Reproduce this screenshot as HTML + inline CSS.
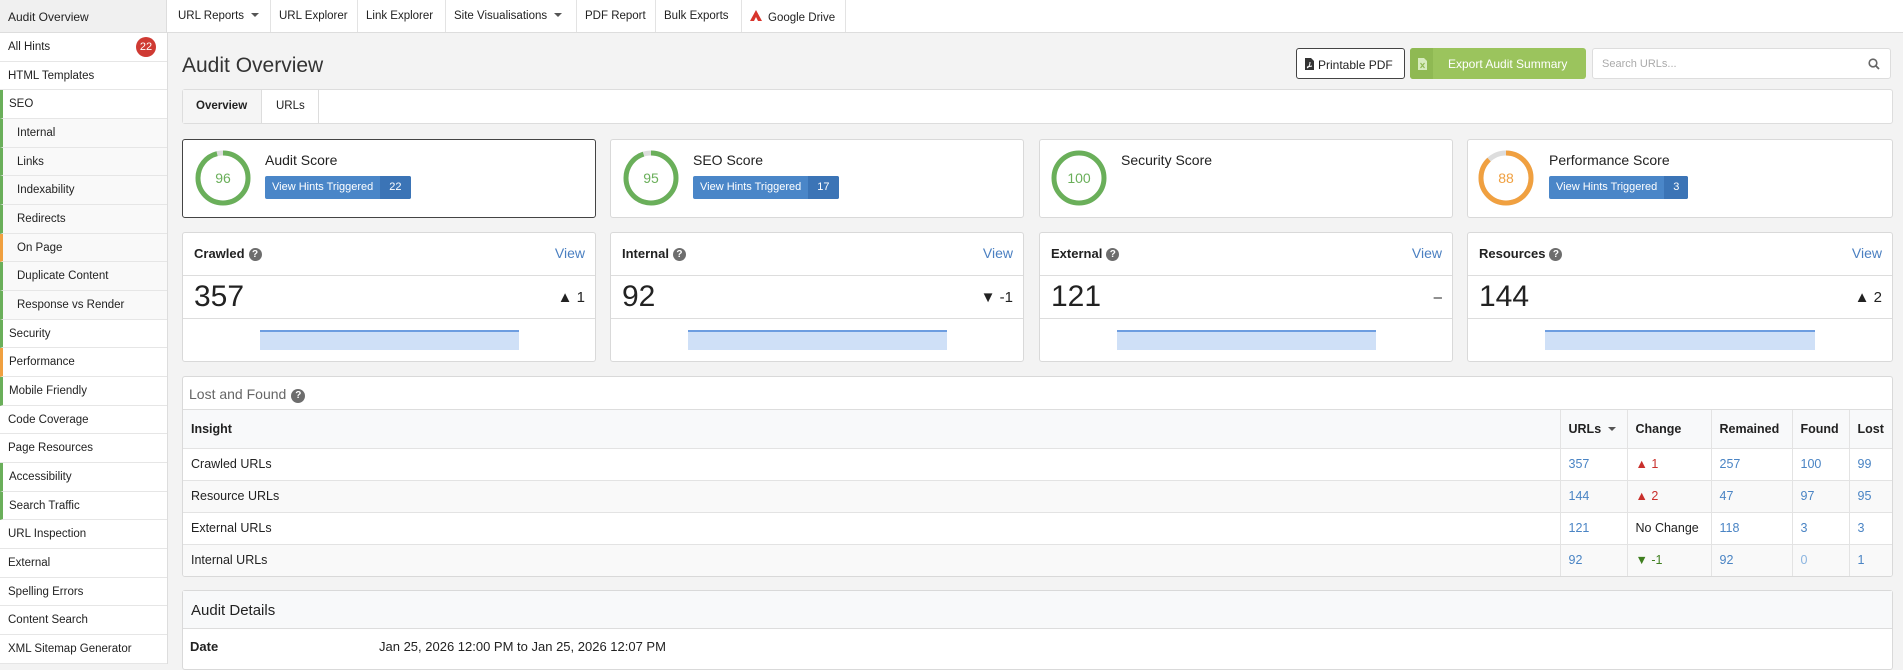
<!DOCTYPE html>
<html><head><meta charset="utf-8"><style>
*{box-sizing:border-box;margin:0;padding:0}
body{width:1903px;height:664px;overflow:hidden;background:#f3f3f3;font-family:"Liberation Sans",sans-serif;font-size:13px;color:#222;position:relative}
.abs{position:absolute}
#top{left:0;top:0;width:1903px;height:33px;background:#fff;border-bottom:1px solid #ddd}
#top .ao{left:0;top:0;width:167px;height:32px;background:#f0f0f0;border-right:1px solid #ddd;padding:10px 8px;font-size:12px}
.nav{top:0;height:32px;border-right:1px solid #e3e3e3;padding:10px 8px;font-size:11.5px;white-space:nowrap}
.caret{display:inline-block;border-left:4px solid transparent;border-right:4px solid transparent;border-top:4px solid #555;margin-left:7px;vertical-align:2px}
#side{left:0;top:33px;width:168px;height:631px;background:#fff;border-right:1px solid #ddd}
.si{height:28.68px;border-bottom:1px solid #e6e6e6;padding:8px 8px;font-size:11.5px;position:relative;white-space:nowrap}
.si.sub{background:#f9f9f9;padding-left:17px}
.si.g{border-left:3px solid #6aaf5a;padding-left:6px}.si.g.sub{padding-left:14px}
.si.o{border-left:3px solid #f0a040;padding-left:6px}.si.o.sub{padding-left:14px}
.badge{position:absolute;right:11px;top:4px;width:20px;height:20px;border-radius:50%;background:#cf3a33;color:#fff;font-size:11px;text-align:center;line-height:20px}
.card{position:absolute;background:#fff;border:1px solid #d9d9d9;border-radius:3px}
.hb{position:absolute;height:23px;border-radius:2px;background:#4a86c8;color:#fff;font-size:11px;line-height:23px;overflow:hidden;white-space:nowrap}
.hb span{display:inline-block;padding:0 7px}
.hb b{display:inline-block;background:#3b74b6;padding:0 9px;font-weight:normal;height:23px}
.q{display:inline-block;width:13px;height:13px;border-radius:50%;background:#6d6d6d;color:#fff;font-size:10px;line-height:13px;text-align:center;font-weight:bold;vertical-align:1px;margin-left:4px}
.st .h{position:absolute;left:0;right:0;top:0;height:43px;border-bottom:1px solid #ddd;padding:13px 11px;font-weight:bold;font-size:13px}
.st .h a{position:absolute;right:10px;top:12px;color:#4a7fc1;font-weight:normal;font-size:14px}
.st .v{position:absolute;left:0;right:0;top:43px;height:43px;border-bottom:1px solid #ddd;padding:4px 11px;font-size:30px}
.st .v i{position:absolute;right:10px;top:13px;font-style:normal;font-size:15px}
.st .c{position:absolute;top:97px;width:259px;height:20px;background:#cfe0f7;border-top:2px solid #6d9de0}
table{border-collapse:collapse;width:100%}
td,th{border-bottom:1px solid #e3e3e3;text-align:left;font-size:12.5px;font-weight:normal;padding:0 8px}
th{font-weight:bold;background:#f8f9fa;height:38px}
td{height:32px}
tr.alt td{background:#f9f9f9}
td.n,th.n{border-left:1px solid #e3e3e3}
.bl{color:#4a84c4}
.red{color:#c9302c}.grn{color:#3f7f1f}
</style></head><body>
<div id="top" class="abs">
 <div class="abs ao">Audit Overview</div>
 <div class="abs nav" style="left:170px;width:101px">URL Reports<span class="caret"></span></div>
 <div class="abs nav" style="left:271px;width:87px">URL Explorer</div>
 <div class="abs nav" style="left:358px;width:88px">Link Explorer</div>
 <div class="abs nav" style="left:446px;width:131px">Site Visualisations<span class="caret"></span></div>
 <div class="abs nav" style="left:577px;width:79px">PDF Report</div>
 <div class="abs nav" style="left:656px;width:86px">Bulk Exports</div>
 <div class="abs nav" style="left:742px;width:104px"><svg width="12" height="12" viewBox="0 0 12 12" style="vertical-align:-1px;margin-right:6px"><path d="M6 0L0 11h4L6 7l2 4h4z" fill="#d8342c"/></svg>Google Drive</div>
</div>
<div id="side" class="abs">
 <div class="si">All Hints<span class="badge">22</span></div>
 <div class="si">HTML Templates</div>
 <div class="si g">SEO</div>
 <div class="si sub g">Internal</div>
 <div class="si sub g">Links</div>
 <div class="si sub g">Indexability</div>
 <div class="si sub g">Redirects</div>
 <div class="si sub o">On Page</div>
 <div class="si sub g">Duplicate Content</div>
 <div class="si sub g">Response vs Render</div>
 <div class="si g">Security</div>
 <div class="si o">Performance</div>
 <div class="si g">Mobile Friendly</div>
 <div class="si">Code Coverage</div>
 <div class="si">Page Resources</div>
 <div class="si g">Accessibility</div>
 <div class="si g">Search Traffic</div>
 <div class="si">URL Inspection</div>
 <div class="si">External</div>
 <div class="si">Spelling Errors</div>
 <div class="si">Content Search</div>
 <div class="si">XML Sitemap Generator</div>
</div>

<div class="abs" style="left:182px;top:54px;font-size:21px;color:#333">Audit Overview</div>
<div class="abs" style="left:1296px;top:48px;width:109px;height:31px;border:1px solid #444;border-radius:3px;background:#fff;padding:9px 0 0 8px;font-size:12px"><svg width="9" height="12" viewBox="0 0 9 12" style="vertical-align:-1px;margin-right:4px"><path d="M0 0h6l3 3v9H0z" fill="#333"/><path d="M2 10c2-1 3-3 3-6M2 9l5-1" stroke="#fff" stroke-width="1" fill="none"/></svg>Printable PDF</div>
<div class="abs" style="left:1410px;top:48px;width:176px;height:31px;border-radius:3px;background:#9bc45d;color:#fff;font-size:12px;overflow:hidden"><div style="position:absolute;left:0;top:0;width:23px;height:31px;background:#8fb953"></div><svg class="abs" style="left:8px;top:10px" width="9" height="12" viewBox="0 0 9 12"><path d="M0 0h6l3 3v9H0z" fill="#d8ecbf"/><path d="M2.5 5l4 5M6.5 5l-4 5" stroke="#8fb953" stroke-width="1.2"/></svg><span style="position:absolute;left:38px;top:9px">Export Audit Summary</span></div>
<div class="abs" style="left:1592px;top:48px;width:299px;height:31px;border:1px solid #ddd;border-radius:3px;background:#fff;padding:9px 0 0 9px;font-size:11px;color:#aaa">Search URLs...<svg class="abs" style="right:10px;top:9px" width="12" height="12" viewBox="0 0 12 12"><circle cx="5" cy="5" r="3.8" stroke="#666" stroke-width="1.6" fill="none"/><path d="M8 8l3 3" stroke="#666" stroke-width="1.8"/></svg></div>

<div class="abs" style="left:182px;top:89px;width:1711px;height:35px;background:#fff;border:1px solid #ddd;border-radius:3px">
 <div class="abs" style="left:0;top:0;width:79px;height:33px;background:#f5f5f5;border-right:1px solid #ddd;font-weight:bold;padding:10px 0 0 13px;font-size:11.5px">Overview</div>
 <div class="abs" style="left:79px;top:0;width:57px;height:33px;border-right:1px solid #ddd;padding:10px 0 0 14px;font-size:11.5px">URLs</div>
</div>

<!-- score cards -->
<div class="card" style="left:182px;top:139px;width:414px;height:79px;border-color:#444">
 <svg class="abs" style="left:12px;top:10px" width="56" height="56" viewBox="0 0 56 56"><circle cx="28" cy="28" r="25" stroke="#ddd" stroke-width="5" fill="none"/><circle cx="28" cy="28" r="25" stroke="#6aaf5a" stroke-width="5" fill="none" stroke-dasharray="150.8 157.1" transform="rotate(-90 28 28)"/><text x="28" y="33" text-anchor="middle" font-size="14" fill="#6aaf5a" font-family="Liberation Sans">96</text></svg>
 <div class="abs" style="left:82px;top:12px;font-size:14px">Audit Score</div>
 <div class="hb" style="left:82px;top:36px"><span>View Hints Triggered</span><b>22</b></div>
</div>
<div class="card" style="left:610px;top:139px;width:414px;height:79px">
 <svg class="abs" style="left:12px;top:10px" width="56" height="56" viewBox="0 0 56 56"><circle cx="28" cy="28" r="25" stroke="#ddd" stroke-width="5" fill="none"/><circle cx="28" cy="28" r="25" stroke="#6aaf5a" stroke-width="5" fill="none" stroke-dasharray="149.2 157.1" transform="rotate(-90 28 28)"/><text x="28" y="33" text-anchor="middle" font-size="14" fill="#6aaf5a" font-family="Liberation Sans">95</text></svg>
 <div class="abs" style="left:82px;top:12px;font-size:14px">SEO Score</div>
 <div class="hb" style="left:82px;top:36px"><span>View Hints Triggered</span><b>17</b></div>
</div>
<div class="card" style="left:1039px;top:139px;width:414px;height:79px">
 <svg class="abs" style="left:11px;top:10px" width="56" height="56" viewBox="0 0 56 56"><circle cx="28" cy="28" r="25" stroke="#6aaf5a" stroke-width="5" fill="none"/><text x="28" y="33" text-anchor="middle" font-size="14" fill="#6aaf5a" font-family="Liberation Sans">100</text></svg>
 <div class="abs" style="left:81px;top:12px;font-size:14px">Security Score</div>
</div>
<div class="card" style="left:1467px;top:139px;width:426px;height:79px">
 <svg class="abs" style="left:10px;top:10px" width="56" height="56" viewBox="0 0 56 56"><circle cx="28" cy="28" r="25" stroke="#ddd" stroke-width="5" fill="none"/><circle cx="28" cy="28" r="25" stroke="#f0a040" stroke-width="5" fill="none" stroke-dasharray="138.2 157.1" transform="rotate(-90 28 28)"/><text x="28" y="33" text-anchor="middle" font-size="14" fill="#f0a040" font-family="Liberation Sans">88</text></svg>
 <div class="abs" style="left:81px;top:12px;font-size:14px">Performance Score</div>
 <div class="hb" style="left:81px;top:36px"><span>View Hints Triggered</span><b>3</b></div>
</div>

<!-- stat cards -->
<div class="card st" style="left:182px;top:232px;width:414px;height:130px"><div class="h">Crawled<span class="q">?</span><a>View</a></div><div class="v">357<i>▲ 1</i></div><div class="c" style="left:77px"></div></div>
<div class="card st" style="left:610px;top:232px;width:414px;height:130px"><div class="h">Internal<span class="q">?</span><a>View</a></div><div class="v">92<i>▼ -1</i></div><div class="c" style="left:77px"></div></div>
<div class="card st" style="left:1039px;top:232px;width:414px;height:130px"><div class="h">External<span class="q">?</span><a>View</a></div><div class="v">121<i>–</i></div><div class="c" style="left:77px"></div></div>
<div class="card st" style="left:1467px;top:232px;width:426px;height:130px"><div class="h">Resources<span class="q">?</span><a>View</a></div><div class="v">144<i>▲ 2</i></div><div class="c" style="left:77px;width:270px"></div></div>

<!-- lost and found -->
<div class="card" style="left:182px;top:376px;width:1711px;height:201px;overflow:hidden">
 <div style="height:33px;border-bottom:1px solid #ddd;padding:9px 6px;font-size:14px;color:#666">Lost and Found<span class="q" style="width:14px;height:14px;line-height:14px;margin-left:5px">?</span></div>
 <table>
  <tr><th>Insight</th><th class="n" style="width:67px">URLs<span class="caret"></span></th><th class="n" style="width:84px">Change</th><th class="n" style="width:81px">Remained</th><th class="n" style="width:57px">Found</th><th class="n" style="width:43px">Lost</th></tr>
  <tr><td>Crawled URLs</td><td class="n bl">357</td><td class="n red">▲ 1</td><td class="n bl">257</td><td class="n bl">100</td><td class="n bl">99</td></tr>
  <tr class="alt"><td>Resource URLs</td><td class="n bl">144</td><td class="n red">▲ 2</td><td class="n bl">47</td><td class="n bl">97</td><td class="n bl">95</td></tr>
  <tr><td>External URLs</td><td class="n bl">121</td><td class="n">No Change</td><td class="n bl">118</td><td class="n bl">3</td><td class="n bl">3</td></tr>
  <tr class="alt"><td>Internal URLs</td><td class="n bl">92</td><td class="n grn">▼ -1</td><td class="n bl">92</td><td class="n bl" style="color:#8ab4e0">0</td><td class="n bl">1</td></tr>
 </table>
</div>

<div class="card" style="left:182px;top:590px;width:1711px;height:80px">
 <div style="height:38px;background:#f8f9fa;border-bottom:1px solid #ddd;padding:11px 8px;font-size:15px">Audit Details</div>
 <div class="abs" style="left:7px;top:48px;font-weight:bold">Date</div>
 <div class="abs" style="left:196px;top:48px">Jan 25, 2026 12:00 PM to Jan 25, 2026 12:07 PM</div>
</div>
</body></html>
